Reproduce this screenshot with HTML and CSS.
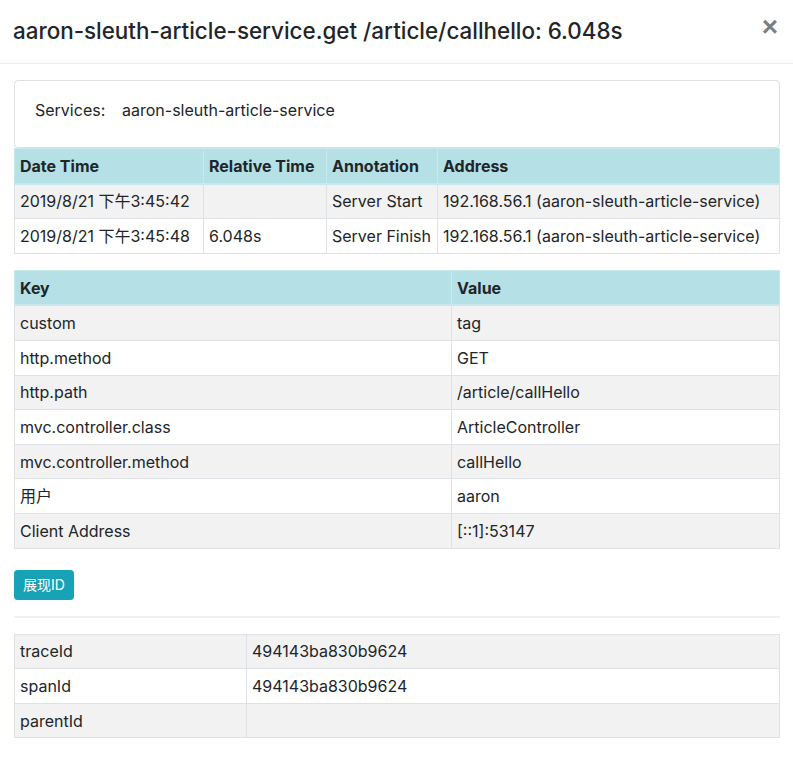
FILE: index.html
```html
<!DOCTYPE html>
<html lang="zh">
<head>
<meta charset="utf-8">
<title>Span detail</title>
<link rel="stylesheet" href="styles.css">
</head>
<body>
<div class="modal">
  <div class="modal-header">
    <h5 class="modal-title">aaron-sleuth-article-service.get /article/callhello: 6.048s</h5>
    <button class="close" type="button">×</button>
  </div>
  <div class="modal-body">
    <div class="card">
      <div class="card-body">
        <span class="label">Services:</span>
        <span class="value">aaron-sleuth-article-service</span>
      </div>
    </div>
    <table class="tbl">
      <colgroup>
        <col class="c-date"><col class="c-rel"><col class="c-ann"><col>
      </colgroup>
      <thead>
        <tr class="info"><th>Date Time</th><th>Relative Time</th><th>Annotation</th><th>Address</th></tr>
      </thead>
      <tbody>
        <tr><td>2019/8/21 下午3:45:42</td><td></td><td>Server Start</td><td>192.168.56.1 (aaron-sleuth-article-service)</td></tr>
        <tr><td>2019/8/21 下午3:45:48</td><td>6.048s</td><td>Server Finish</td><td>192.168.56.1 (aaron-sleuth-article-service)</td></tr>
      </tbody>
    </table>
    <table class="tbl">
      <colgroup>
        <col class="c-key"><col>
      </colgroup>
      <thead>
        <tr class="info"><th>Key</th><th>Value</th></tr>
      </thead>
      <tbody>
        <tr><td>custom</td><td>tag</td></tr>
        <tr><td>http.method</td><td>GET</td></tr>
        <tr><td>http.path</td><td>/article/callHello</td></tr>
        <tr><td>mvc.controller.class</td><td>ArticleController</td></tr>
        <tr><td>mvc.controller.method</td><td>callHello</td></tr>
        <tr><td>用户</td><td>aaron</td></tr>
        <tr><td>Client Address</td><td>[::1]:53147</td></tr>
      </tbody>
    </table>
    <div class="actions">
      <button class="btn-info" type="button">展现ID</button>
    </div>
    <hr class="divider">
    <table class="tbl last">
      <colgroup>
        <col class="c-id"><col>
      </colgroup>
      <tbody>
        <tr><td>traceId</td><td>494143ba830b9624</td></tr>
        <tr><td>spanId</td><td>494143ba830b9624</td></tr>
        <tr><td>parentId</td><td></td></tr>
      </tbody>
    </table>
  </div>
</div>
</body>
</html>
```
FILE: styles.css
```css
* { box-sizing: border-box; }
html, body { margin: 0; padding: 0; background: #fff; }
body {
  font-family: Inter, "Noto Sans", "Noto Sans CJK SC", sans-serif;
  font-size: 16px;
  line-height: 1.5;
  color: #212529;
}
.modal { width: 793px; }
.modal-header {
  display: flex;
  align-items: flex-start;
  justify-content: space-between;
  padding: 16px 15px 16px 13px;
  height: 64px;
  border-bottom: 1px solid #e9ecef;
}
.modal-title {
  margin: 0;
  font-size: 22.4px;
  font-weight: 500;
  line-height: 30px;
}
.close {
  border: 0;
  background: transparent;
  padding: 0;
  margin: -3px 0 0 0;
  font-family: "Liberation Sans", sans-serif;
  font-size: 28px;
  font-weight: 700;
  line-height: 1;
  color: #000;
  opacity: .5;
  cursor: pointer;
}
.modal-body { padding: 16px 13px 28px 14px; }
.card {
  border: 1px solid rgba(0,0,0,.125);
  border-radius: 4px;
}
.card-body {
  display: flex;
  padding: 17px 20px 25px 20px;
}
.label { width: 87px; }
.tbl {
  width: 100%;
  border-collapse: collapse;
  table-layout: fixed;
  margin-bottom: 16px;
}
.tbl th, .tbl td {
  border: 1px solid #dee2e6;
  padding: 4.8px 5px;
  text-align: left;
  vertical-align: top;
  line-height: 24px;
  white-space: nowrap;
}
.tbl th { font-weight: 700; }
.tbl .info th {
  background: #b4e0e6;
  border-color: #c9e8ed;
  border-bottom: 2px solid #c9e8ed;
}
.tbl tbody tr:nth-child(odd) { background: #f2f2f2; }
.c-date { width: 189px; }
.c-rel { width: 123px; }
.c-ann { width: 111px; }
.c-key { width: 437px; }
.c-id { width: 232px; }
.actions { padding-top: 5px; }
.btn-info {
  font-family: Inter, "Noto Sans CJK SC", sans-serif;
  background: #17a2b8;
  color: #fff;
  border: 1px solid #17a2b8;
  border-radius: 3.2px;
  font-size: 14px;
  line-height: 20px;
  padding: 4px 8px;
  height: 30px;
}
.divider {
  margin: 16px 0;
  border: 0;
  border-top: 2px solid #f0f0f0;
  height: 0;
}
.tbl.last { margin-bottom: 0; }
```
